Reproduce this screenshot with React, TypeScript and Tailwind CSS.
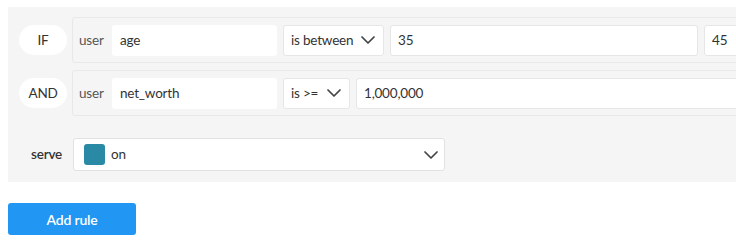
const font = { fontFamily: '"Source Sans Pro", Lato, "Liberation Sans", sans-serif' };

function Chevron({ w = 14 }: { w?: number }) {
  return (
    <svg width={w} height={8} viewBox="0 0 14 8" fill="none" className="shrink-0">
      <polyline points="1,1 7,7 13,1" stroke="#444" strokeWidth="1.7" strokeLinecap="round" strokeLinejoin="round" />
    </svg>
  );
}

function Pill({ label }: { label: string }) {
  return (
    <div className="flex h-[30px] w-[48px] shrink-0 items-center justify-center rounded-full bg-white text-[13.5px] tracking-[-0.2px] text-[#333]">
      {label}
    </div>
  );
}

function Box({ className, children }: { className: string; children?: React.ReactNode }) {
  return (
    <div className={`flex h-[31px] shrink-0 items-center rounded-[3px] border border-[#e6e6e6] bg-white px-[7px] text-[13.5px] tracking-[-0.2px] text-[#333] ${className}`}>
      {children}
    </div>
  );
}

export default function App() {
  return (
    <div className="w-[736px] h-[241px] overflow-hidden bg-white" style={font}>
      <div className="w-[900px] pl-[8px] pt-[7px]">
        {/* panel con las condiciones */}
        <div className="bg-[#f5f5f5] pl-[11px] pt-[10px] pb-[11px]">
          <div className="flex items-center gap-[5px]">
            <Pill label="IF" />
            <div className="flex h-[46px] flex-1 items-center gap-[6px] rounded-[3px] border border-[#e8e8e8] pl-[6px]">
              <span className="w-[27px] text-[13.5px] tracking-[-0.2px] text-[#555]">user</span>
              <Box className="w-[165px] border-transparent">age</Box>
              <Box className="w-[101px] justify-between pr-[8px]">
                <span>is between</span>
                <Chevron />
              </Box>
              <Box className="w-[308px]">35</Box>
              <Box className="w-[120px]">45</Box>
            </div>
          </div>
          <div className="mt-[7px] flex items-center gap-[5px]">
            <Pill label="AND" />
            <div className="flex h-[46px] flex-1 items-center gap-[6px] rounded-[3px] border border-[#e8e8e8] pl-[6px]">
              <span className="w-[27px] text-[13.5px] tracking-[-0.2px] text-[#555]">user</span>
              <Box className="w-[165px] border-transparent">net_worth</Box>
              <Box className="w-[67px] justify-between pr-[8px]">
                <span>is &gt;=</span>
                <Chevron />
              </Box>
              <Box className="w-[500px]">1,000,000</Box>
            </div>
          </div>
          <div className="mt-[22px] flex items-center">
            <span className="w-[54px] pl-[12px] text-[13.5px] font-semibold tracking-[-0.2px] text-[#333]">serve</span>
            <div className="flex h-[33px] w-[372px] items-center rounded-[3px] border border-[#e2e2e2] bg-white pl-[10px] pr-[6px]">
              <span className="h-[21px] w-[21px] rounded-[3px] bg-[#2a8aa6]" />
              <span className="ml-[6px] flex-1 text-[13.5px] tracking-[-0.2px] text-[#333]">on</span>
              <Chevron />
            </div>
          </div>
        </div>

        <button className="mt-[21px] h-[32px] w-[128px] rounded-[3px] bg-[#2196f3] text-[14px] font-semibold tracking-[-0.2px] text-white">
          Add rule
        </button>
      </div>
    </div>
  );
}
